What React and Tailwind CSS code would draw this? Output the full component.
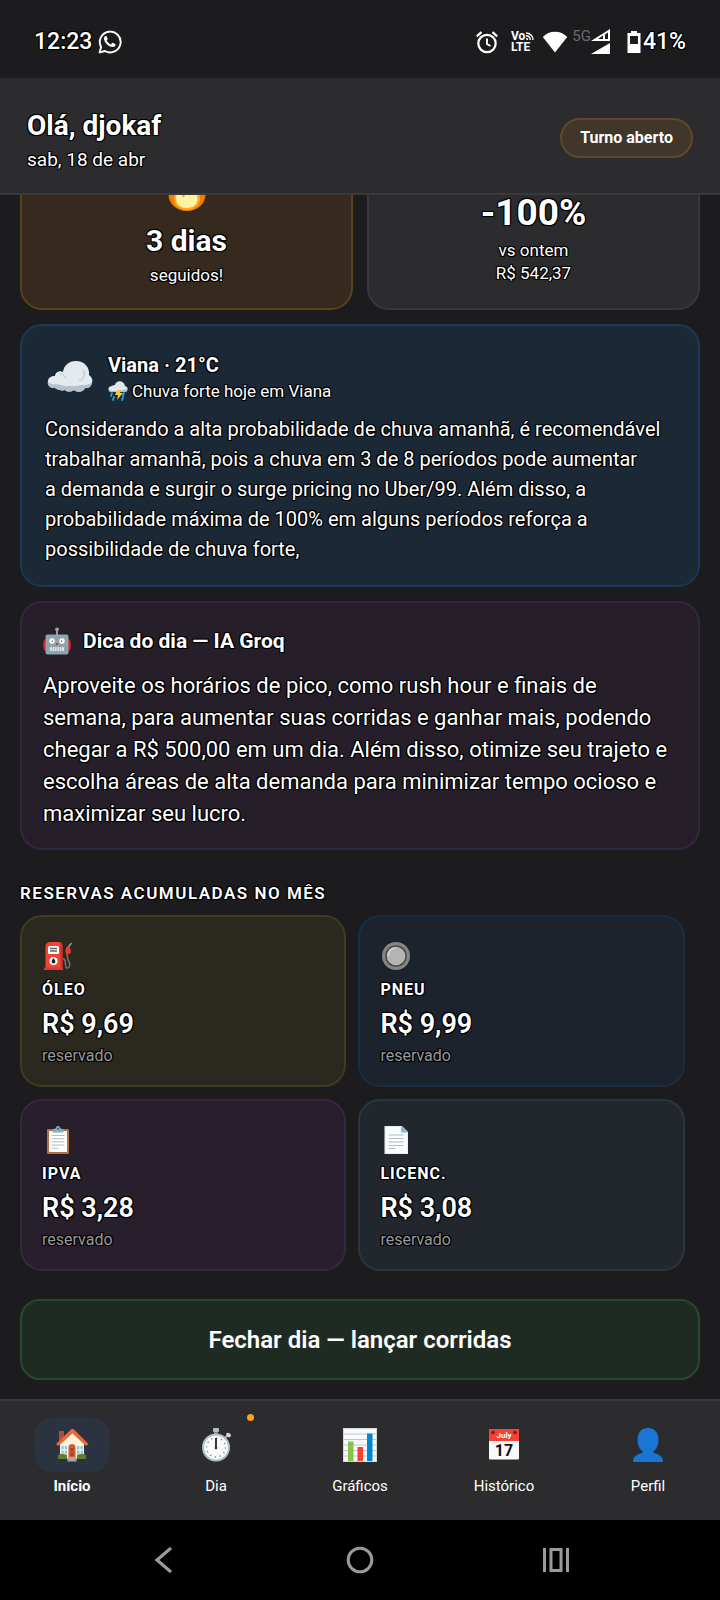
// Driver dashboard - home screen
import React, { useState } from 'react';

/* ---------- Icons ---------- */

const WhatsIcon = () => (
  <svg viewBox="0 0 24 24" className="h-6 w-6" fill="none" aria-hidden="true">
    <path d="M1.6 22.4 3.1 17A10.4 10.4 0 1 1 7 21Z" stroke="#fff" strokeWidth="1.9" strokeLinejoin="round" />
    <path
      d="M8.8 6.6c-.3-.6-.6-.6-1-.6-.9 0-1.9 1-1.9 2.5 0 3.5 4.6 8.6 8.7 8.6 1.8 0 3-1 3-2.3 0-.5-.1-.7-.5-.9l-2.1-1c-.4-.2-.7-.1-.9.2l-.9 1.1c-.2.2-.4.3-.7.1-1.6-.7-3-2-3.800-3.500-.1-.3 0-.4.2-.6l.6-.8c.1-.2.2-.4.1-.6Z"
      fill="#fff"
    />
  </svg>
);

const AlarmIcon = () => (
  <svg viewBox="0 0 24 24" className="h-6 w-6" fill="none" stroke="#fff" aria-hidden="true">
    <circle cx="12" cy="13.5" r="8.7" strokeWidth="2.2" />
    <path d="M12 8.5v5.5l3.5 2" strokeWidth="1.9" />
    <path d="M1.8 6.3 6.5 2.2M22.2 6.3l-4.7-4.1" strokeWidth="2.2" />
  </svg>
);

const VolteIcon = () => (
  <div className="flex flex-col text-[12px] leading-[11px] font-bold [text-shadow:none]">
    <span className="flex items-center">
      Vo
      <svg viewBox="0 0 9 9" className="h-[9px] w-[9px]" fill="none" stroke="#fff" strokeWidth="1.4" aria-hidden="true">
        <path d="M1 1c4 0 7 3 7 7M1 3.8C3.5 3.8 5.2 5.5 5.2 8M1 6.5C2 6.5 2.5 7 2.5 8" />
      </svg>
    </span>
    <span>LTE</span>
  </div>
);

const WifiIcon = () => (
  <svg viewBox="0 0 26 22" className="h-[22px] w-[26px]" aria-hidden="true">
    <path d="M13 21.5.8 6C4 2.500 8.300.8 13 .8S22 2.5 25.2 6Z" fill="#fff" />
  </svg>
);

const SignalIcon = () => (
  <svg viewBox="0 0 20 26" className="h-[26px] w-5" aria-hidden="true">
    <path d="M0 12 19 0v12Zm7-2h5V6.600ZM14 10h3V3.600l-3 2Z" fill="#fff" fillRule="evenodd" />
    <path d="M0 25 19 14v11Z" fill="#fff" />
  </svg>
);

const BatteryIcon = () => (
  <svg viewBox="0 0 14 22" className="h-[22px] w-[14px]" aria-hidden="true">
    <path d="M4 0h6v2h3.5v20H.5V2H4Zm-1 5v8h8V5Z" fill="#fff" fillRule="evenodd" />
  </svg>
);

const FireIcon = () => (
  <svg viewBox="0 0 40 46" className="h-[46px] w-10" aria-hidden="true">
    <path d="M18 1c2 8 12 12 18 20 7 12-2 25-16 25S-3 33 4 21c1 3 2 4 4 5C7 16 12 8 18 1Z" fill="#f57c00" />
    <path d="M19 14c2 6 9 8 13 14 4 10-3 17-12 17S4 38 8 28c2 2 3 2 5 2-1-7 2-11 6-16Z" fill="#ffa726" />
    <path d="M10 28h4l2 5 3-4 3 1h8c2 8-2 13-10 13S7 38 10 28Z" fill="#fff3a0" />
  </svg>
);

const CloudIcon = () => (
  <svg viewBox="0 0 46 34" className="h-[34px] w-[46px]" aria-hidden="true">
    <path
      d="M8 28c-5 0-8-3-7-7 0-3 3-5 7-5 0-3 4-6 8-4C17 5 22 1 29 1c8 0 14 6 13 14 3 2 4 5 3 8-1 4-4 5-7 5-1 4-8 5-11 2-3 2-7 2-9 0-3 1-7 0-10-2Z"
      fill="#e4eaee"
    />
    <path
      d="M1 22c5 4 8 1 13 3 4 2 6 1 9 1 5 1 8-1 11-1 5 0 8 0 11-3 0 4-3 7-7 6-1 4-8 5-11 2-3 2-7 2-9 0-3 1-7 0-10-2-5 1-8-3-7-6Z"
      fill="#b5c2cb"
    />
    <path d="M36 10c3 4 1 9-4 11M13 14c3 0 5 2 5 4" stroke="#c5d0d7" strokeWidth="1.5" fill="none" />
  </svg>
);

const StormIcon = () => (
  <svg viewBox="0 0 20 20" className="h-5 w-5" aria-hidden="true">
    <path d="M3 11c-4-1-3-6 1-6 1-1 2-1 3-1 1-5 9-5 10 1 4 1 3 6 0 6Z" fill="#e1e8ec" />
    <path d="M1 9c5 2 12 1 18-1 0 2-1 3-3 3H3C2 11 1 10 1 9Z" fill="#aebdc6" />
    <path d="m4 12-1 3M16 12l-1 3M6 16l-1 3M15 16l-1 3" stroke="#29a3e8" strokeWidth="1.8" strokeLinecap="round" />
    <path d="M9 9h4l-1 3h3l-6 7 1-5H7Z" fill="#fdc72e" />
  </svg>
);

const RobotIcon = () => (
  <svg viewBox="0 0 28 28" className="h-7 w-7" aria-hidden="true">
    <path d="M13.2 3h1.6v6h-1.6Z" fill="#b0bec5" />
    <circle cx="14" cy="2.3" r="1.9" fill="#90a4ae" />
    <path d="M3 12v12c-2 0-3-2-3-6s1-6 3-6ZM25 12v12c2 0 3-2 3-6s-1-6-3-6Z" fill="#c62828" />
    <rect x="2.5" y="7.5" width="23" height="20" rx="2" fill="#90a4ae" />
    <circle cx="9" cy="14" r="2.7" fill="#fff" />
    <circle cx="19" cy="14" r="2.7" fill="#fff" />
    <circle cx="9.3" cy="14.3" r=".7" fill="#455a64" />
    <circle cx="18.7" cy="14.3" r=".7" fill="#455a64" />
    <path d="m14 15.5 1.5 2.5h-3Z" fill="#c62828" />
    <rect x="7" y="20" width="14" height="4" rx="1" fill="#e8eef0" />
    <path d="M9.3 20v4M11.7 20v4M14 20v4M16.4 20v4M18.7 20v4" stroke="#78909c" strokeWidth=".7" />
  </svg>
);

const FuelIcon = () => (
  <svg viewBox="0 0 28 28" className="h-7 w-7" aria-hidden="true">
    <path d="M19 17c4-1 1 9 4 9s4-4 1-8l-1-6V8" fill="none" stroke="#757575" strokeWidth="1.5" />
    <path d="M24 5.5 27.5 1" stroke="#9e9e9e" strokeWidth="1.4" />
    <path d="M22 6c1-2 3-2 4-1l1 6-4 2c-2-2-2-4-1-7Z" fill="#e53935" />
    <path d="M1.5 27V4c0-2 2-4 5-4h8c3 0 4 2 4 4v23Z" fill="#f44336" />
    <path d="M15.5.5c2 .5 3 1.5 3 3.5v22h-2V4c0-1.5 0-2.5-1-3.5Z" fill="#c5302c" />
    <path d="M0 25.5h19V28H0Z" fill="#d83a35" />
    <rect x="4" y="4" width="11" height="8" rx="1.5" fill="#fff" />
    <path d="M6 6.5h7M6 9h7" stroke="#616161" strokeWidth="1.3" />
    <circle cx="9.5" cy="19" r="4" fill="#fff" />
    <path d="M9.5 16c1 1.5 1.9 2.5 1.9 3.6a1.9 1.9 0 0 1-3.8 0C7.6 18.5 8.5 17.5 9.5 16Z" fill="#212121" />
  </svg>
);

const TireIcon = () => (
  <svg viewBox="0 0 28 28" className="h-7 w-7" aria-hidden="true">
    <circle cx="14" cy="14" r="14" fill="#858585" />
    <circle cx="14" cy="14" r="10.8" fill="#484848" />
    <circle cx="14" cy="14" r="9.3" fill="#b4b4b4" />
    <path d="M6.5 13c0-4 3-6.5 6.5-7" stroke="#d8d8d8" strokeWidth="1.3" fill="none" strokeLinecap="round" />
  </svg>
);

const ClipboardIcon = () => (
  <svg viewBox="0 0 28 28" className="h-7 w-7" aria-hidden="true">
    <rect x="3" y="3" width="22" height="25" rx="1" fill="#b56f43" />
    <path d="M5 5h18v21H5Z" fill="#fff" />
    <path d="M7.5 9.5h13M7.5 12.7h13M7.5 15.9h13M7.5 19.1h13M7.5 22.3h7" stroke="#b5bcc2" strokeWidth="1" />
    <path d="M8.5 6.5V4c0-1 1-1.2 3-1.5C12 .5 13 0 14 0s2 .5 2.5 2.5c2 .3 3 .5 3 1.5v2.5Z" fill="#82aec0" />
    <circle cx="14" cy="2.6" r="1.1" fill="#46606e" />
  </svg>
);

const PageIcon = () => (
  <svg viewBox="0 0 28 28" className="h-7 w-7" aria-hidden="true">
    <path d="M2.5 0H20l6 6v22H2.5Z" fill="#e3f2fd" />
    <path d="M4 1h15l6 6v20H4Z" fill="#fafdff" />
    <path d="M19 0v6.5h7Z" fill="#82b6d9" />
    <path d="M6.5 9h15M6.5 12.5h15M6.5 16h15M6.5 19.5h15M6.5 22.5h7" stroke="#b4b9bc" strokeWidth="1" />
  </svg>
);

const HomeIcon = () => (
  <svg viewBox="0 0 34 34" className="h-[34px] w-[34px]" aria-hidden="true">
    <path d="M4 3h5v10H4Z" fill="#a84f38" />
    <path d="M5 15 17 3l12 12v16H5Z" fill="#fff3dc" />
    <path d="M1 16 16 1.5q1.5-1.5 3 0L33.5 16l-2.5 2L17.5 5.5 3.5 18Z" fill="#e8693f" />
    <path d="M6.5 18h5.5v8H6.5ZM22 18h6v8h-6Z" fill="#8ec6cf" />
    <path d="M9.2 18v8M25 18v8M6.5 22H12M22 22h6" stroke="#fff" strokeWidth="1" />
    <path d="M13.5 30V19c0-4 7-4 7 0v11Z" fill="#d1593a" />
    <path d="M15.5 20h3v3h-3Zm0 4.5h3V28h-3Z" fill="#a8432b" />
    <path d="M3 27q4-2 9 0v4H3ZM22 27q5-2 9 0v4h-9Z" fill="#5f7d2f" />
    <path d="M12.5 29h9v4.5h-9Z" fill="#a9a9a9" />
  </svg>
);

const WatchIcon = () => (
  <svg viewBox="0 0 34 34" className="h-[34px] w-[34px]" aria-hidden="true">
    <path d="M15 3h4v5h-4Z" fill="#78909c" />
    <rect x="14" y="0" width="6" height="4" rx="1" fill="#b0bec5" />
    <path d="m26 10 3-3" stroke="#90a4ae" strokeWidth="2" />
    <ellipse cx="29.5" cy="7" rx="2.6" ry="2" fill="#cfd8dc" transform="rotate(35 29.5 7)" />
    <circle cx="17" cy="19.5" r="14" fill="#b0bec5" />
    <circle cx="17" cy="19.5" r="12" fill="#fafafa" />
    <circle cx="17" cy="19.5" r="9.5" fill="none" stroke="#607d8b" strokeWidth="1.6" strokeDasharray="1 3.97" />
    <path d="M17 10v11" stroke="#212121" strokeWidth="1.8" />
    <circle cx="17" cy="20" r="1.4" fill="#424242" />
  </svg>
);

const ChartIcon = () => (
  <svg viewBox="0 0 34 34" className="h-[34px] w-[34px]" aria-hidden="true">
    <rect width="34" height="34" fill="#fafafa" />
    <path d="M0 6h34M0 11.5h34M0 17h34M0 22.5h34M0 28h34" stroke="#bcc8ce" strokeWidth="1" />
    <path d="M.5.5h33v33H.5Z" stroke="#cfd8dc" fill="none" />
    <rect x="5" y="13.5" width="5.5" height="19.5" fill="#8bc34a" />
    <rect x="14.5" y="19" width="5.5" height="14" fill="#f44336" />
    <rect x="24" y="5.5" width="5.5" height="27.5" fill="#0288d1" />
  </svg>
);

const CalendarIcon = () => (
  <svg viewBox="0 0 34 34" className="h-[34px] w-[34px]" aria-hidden="true">
    <rect x="2" y="1" width="30" height="30.5" rx="1" fill="#fafafa" />
    <path d="M2 2q0-1 1-1h28q1 0 1 1v11H2Z" fill="#f44336" />
    <circle cx="6" cy="4.5" r="1.8" fill="#7f1d1d" />
    <circle cx="28" cy="4.5" r="1.8" fill="#7f1d1d" />
    <g textAnchor="middle" fontWeight="700" className="[text-shadow:none]">
      <text x="17" y="10" fontSize="8" fill="#fff">July</text>
      <text x="17" y="28" fontSize="16" fill="#111">17</text>
    </g>
  </svg>
);

const ProfileIcon = () => (
  <svg viewBox="0 0 34 34" className="h-[34px] w-[34px]" aria-hidden="true">
    <path
      d="M17 0c7 0 10.5 5 10.5 12 0 5-1.8 9-5 11.5V25c5 1 9.5 3 9.5 9H2c0-6 4.5-8 9.5-9v-1.5C8.3 21 6.5 17 6.5 12 6.5 5 10 0 17 0Z"
      fill="#1976d2"
    />
  </svg>
);

/* ---------- Data ---------- */

const weatherLines = [
  'Considerando a alta probabilidade de chuva amanhã, é recomendável',
  'trabalhar amanhã, pois a chuva em 3 de 8 períodos pode aumentar',
  'a demanda e surgir o surge pricing no Uber/99. Além disso, a',
  'probabilidade máxima de 100% em alguns períodos reforça a',
  'possibilidade de chuva forte,'
];

const tipLines = [
  'Aproveite os horários de pico, como rush hour e finais de',
  'semana, para aumentar suas corridas e ganhar mais, podendo',
  'chegar a R$ 500,00 em um dia. Além disso, otimize seu trajeto e',
  'escolha áreas de alta demanda para minimizar tempo ocioso e',
  'maximizar seu lucro.'
];

const reserves = [
  { label: 'ÓLEO', value: 'R$ 9,69', icon: FuelIcon, box: 'bg-[#2b281f] border-[#423b20]' },
  { label: 'PNEU', value: 'R$ 9,99', icon: TireIcon, box: 'bg-[#1c232c] border-[#1b2d42]' },
  { label: 'IPVA', value: 'R$ 3,28', icon: ClipboardIcon, box: 'bg-[#271f2b] border-[#372841]' },
  { label: 'LICENC.', value: 'R$ 3,08', icon: PageIcon, box: 'bg-[#21272d] border-[#2b373f]' }
];

const tabs = [
  { id: 'inicio', label: 'Início', icon: HomeIcon },
  { id: 'dia', label: 'Dia', icon: WatchIcon, dot: true },
  { id: 'graficos', label: 'Gráficos', icon: ChartIcon },
  { id: 'historico', label: 'Histórico', icon: CalendarIcon },
  { id: 'perfil', label: 'Perfil', icon: ProfileIcon }
];

/* ---------- Sections ---------- */

const StatusBar = () => (
  <div className="flex h-[78px] shrink-0 items-center justify-between px-[34px] pt-[6px]">
    <div className="flex items-center gap-[6px] text-[23px] font-medium">
      <span>12:23</span>
      <WhatsIcon />
    </div>
    <div className="flex items-center">
      <AlarmIcon />
      <div className="ml-3"><VolteIcon /></div>
      <div className="ml-2"><WifiIcon /></div>
      <span className="mb-3 ml-1 text-[15px] leading-4 text-[#6b6b6d] [text-shadow:none]">5G</span>
      <SignalIcon />
      <div className="ml-4"><BatteryIcon /></div>
      <span className="ml-0.5 text-[23px] font-medium">41%</span>
    </div>
  </div>
);

const Header = () => (
  <header className="flex shrink-0 items-start justify-between border-b-2 border-[#39393b] bg-[#2c2c2e] px-[27px] pt-[30px] pb-[17px]">
    <div>
      <h1 className="text-[28px] leading-9 font-bold">Olá, djokaf</h1>
      <p className="text-[19px] leading-8">sab, 18 de abr</p>
    </div>
    <button className="mt-[10px] h-10 rounded-full border-2 border-[#5f4827] bg-[#41362a] px-[18px] text-[16px] font-bold">
      Turno aberto
    </button>
  </header>
);

const Highlights = () => (
  <div className="flex gap-[14px] text-center">
    <section className="flex flex-1 flex-col items-center justify-end rounded-[22px] border-2 border-[#59431f] bg-[#352a1d] pt-6 pb-[21px]">
      <FireIcon />
      <p className="mt-3 text-[30px] leading-9 font-bold">3 dias</p>
      <p className="mt-1 text-[17px] leading-6">seguidos!</p>
    </section>
    <section className="flex flex-1 flex-col items-center justify-end rounded-[22px] border-2 border-[#39393b] bg-[#2c2c2e] pt-6 pb-[23px]">
      <p className="text-[37px] leading-8 font-bold">-100%</p>
      <p className="mt-[10px] text-[17px] leading-[23px]">vs ontem</p>
      <p className="text-[17px] leading-[23px]">R$ 542,37</p>
    </section>
  </div>
);

const WeatherCard = () => (
  <section className="mt-[14px] rounded-[22px] border-2 border-[#1d3858] bg-[#1b2836] px-[23px] pt-[22px] pb-[21px]">
    <div className="flex h-[58px] items-center gap-[15px] pl-0.5">
      <CloudIcon />
      <div>
        <h2 className="text-[20px] leading-[27px] font-bold">Viana · 21°C</h2>
        <p className="flex items-center gap-1 text-[17px] leading-6">
          <StormIcon />
          Chuva forte hoje em Viana
        </p>
      </div>
    </div>
    <p className="mt-2 text-[20px] leading-[30px] whitespace-pre-line">{weatherLines.join('\n')}</p>
  </section>
);

const TipCard = () => (
  <section className="mt-[14px] rounded-[22px] border-2 border-[#34263e] bg-[#261f2a] px-[21px] pt-5 pb-[18px]">
    <div className="flex h-9 items-center gap-3">
      <RobotIcon />
      <h2 className="text-[21px] leading-7 font-bold">Dica do dia — IA Groq</h2>
    </div>
    <p className="mt-[11px] text-[22px] leading-8 whitespace-pre-line">{tipLines.join('\n')}</p>
  </section>
);

const ReserveCard = ({ item }) => {
  const Icon = item.icon;

  return (
    <li className={`w-[48%] rounded-[22px] border-2 px-5 pt-[25px] pb-[18px] ${item.box}`}>
      <div className="pl-0.5">
        <Icon />
      </div>
      <h3 className="mt-2 text-[16px] leading-6 font-bold tracking-[1px]">{item.label}</h3>
      <p className="mt-1 text-[27px] leading-9 font-semibold">{item.value}</p>
      <p className="mt-[3px] text-[16px] leading-[22px] text-[#98989d]">reservado</p>
    </li>
  );
};

const TabBar = ({ active, onChange }) => (
  <nav className="grid shrink-0 grid-cols-5 border-t-2 border-[#39393b] bg-[#2c2c2e] pt-[17px] pb-[22px]">
    {tabs.map((tab) => {
      const Icon = tab.icon;
      const isActive = tab.id === active;

      return (
        <button key={tab.id} onClick={() => onChange(tab.id)} className="flex flex-col items-center gap-[3px]">
          <span
            className={`relative flex h-[54px] w-[76px] items-center justify-center rounded-[18px] ${isActive ? 'bg-[#2a333f]' : ''}`}
          >
            <Icon />
            {tab.dot && <span className="absolute -top-1 right-0 h-[7px] w-[7px] rounded-full bg-[#ff9f1a]" />}
          </span>
          <span className={`text-[15px] leading-[23px] ${isActive ? 'font-bold' : ''}`}>{tab.label}</span>
        </button>
      );
    })}
  </nav>
);

const SystemNav = () => (
  <div className="grid h-20 shrink-0 grid-cols-3 place-items-center bg-black px-[66px]">
    <button aria-label="Voltar">
      <svg viewBox="0 0 20 28" className="h-7 w-5" fill="none" stroke="#9a9a9a" strokeWidth="3.2">
        <path d="M17 2 3 14l14 12" />
      </svg>
    </button>
    <button aria-label="Tela inicial">
      <svg viewBox="0 0 28 28" className="h-7 w-7" fill="none" stroke="#9a9a9a" strokeWidth="3">
        <circle cx="14" cy="14" r="11.8" />
      </svg>
    </button>
    <button aria-label="Recentes">
      <svg viewBox="0 0 28 28" className="h-7 w-7" fill="none" stroke="#9a9a9a" strokeWidth="3">
        <path d="M2.5 2v24M25.5 2v24M9 3.5h10v21H9Z" />
      </svg>
    </button>
  </div>
);

const App = () => {
  const [activeTab, setActiveTab] = useState('inicio');

  return (
    <div className="flex h-screen flex-col overflow-hidden bg-[#1c1c1e] font-[Roboto,sans-serif] text-white [text-shadow:1px_1px_0_#000,-1px_-1px_0_#000,1px_-1px_0_#000,-1px_1px_0_#000,0_0_2px_#000]">
      <StatusBar />
      <Header />

      <main className="flex min-h-0 flex-1 flex-col justify-end overflow-hidden px-5 pb-[19px]">
        <Highlights />
        <WeatherCard />
        <TipCard />

        <h2 className="mt-[31px] mb-[10px] text-[17px] leading-6 font-semibold tracking-[1.5px]">
          RESERVAS ACUMULADAS NO MÊS
        </h2>
        <ul className="flex flex-wrap gap-3">
          {reserves.map((item) => (
            <ReserveCard key={item.label} item={item} />
          ))}
        </ul>

        <button className="mt-7 w-full rounded-[20px] border-2 border-[#27492f] bg-[#1f2b22] pt-[23px] pb-[21px] text-[24px] leading-[33px] font-semibold">
          Fechar dia — lançar corridas
        </button>
      </main>

      <TabBar active={activeTab} onChange={setActiveTab} />
      <SystemNav />
    </div>
  );
};

export default App;
